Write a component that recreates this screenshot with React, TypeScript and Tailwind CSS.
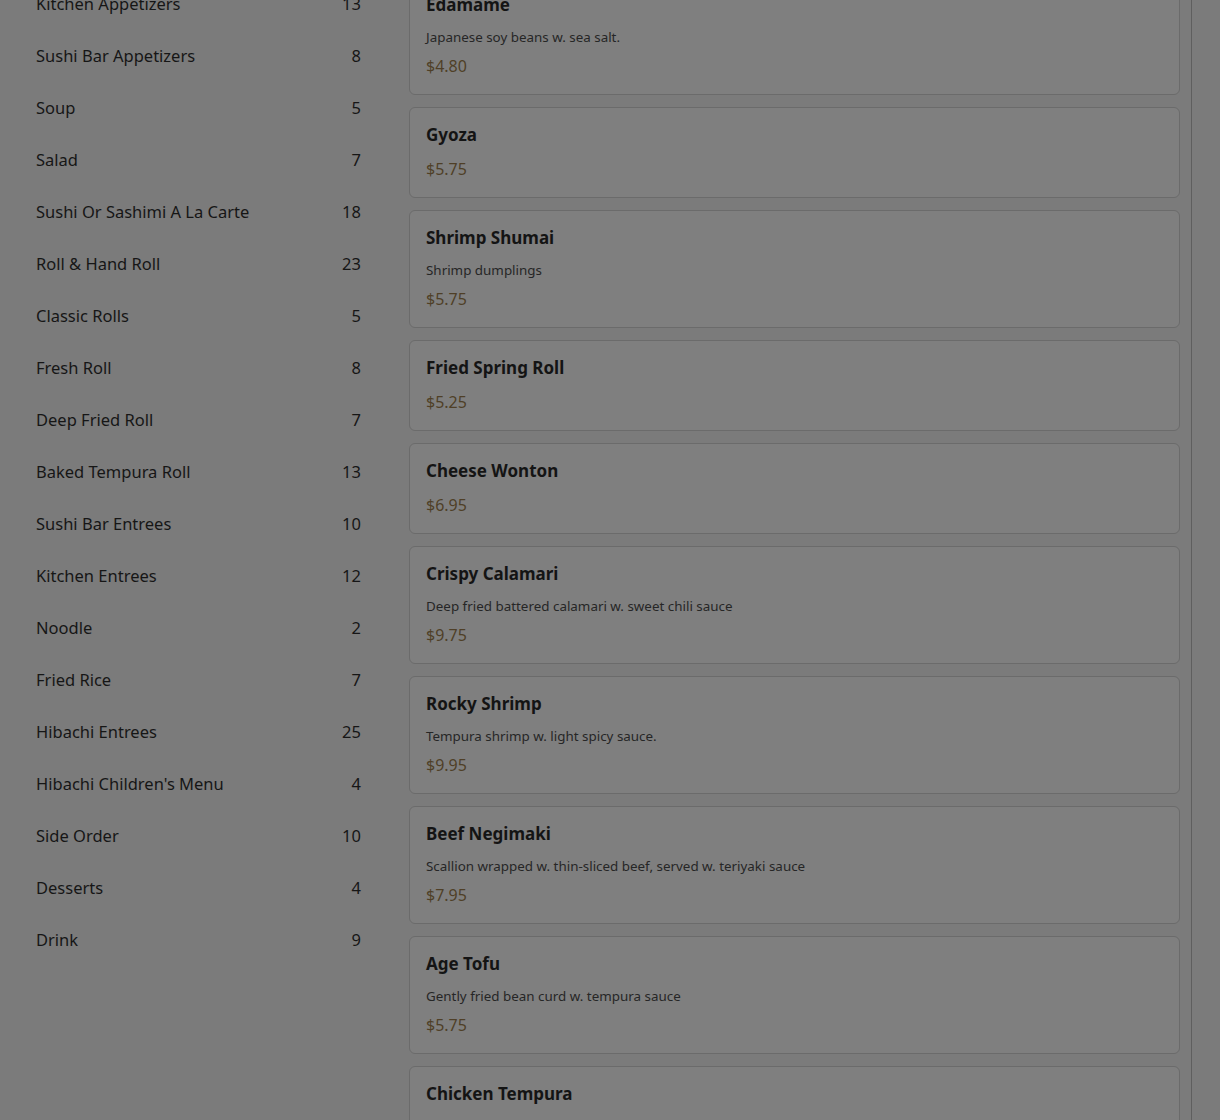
import React from "react";

interface Category {
  name: string;
  count: number;
}

interface MenuItem {
  name: string;
  desc?: string;
  price: string;
}

const categories: Category[] = [
  { name: "Kitchen Appetizers", count: 13 },
  { name: "Sushi Bar Appetizers", count: 8 },
  { name: "Soup", count: 5 },
  { name: "Salad", count: 7 },
  { name: "Sushi Or Sashimi A La Carte", count: 18 },
  { name: "Roll & Hand Roll", count: 23 },
  { name: "Classic Rolls", count: 5 },
  { name: "Fresh Roll", count: 8 },
  { name: "Deep Fried Roll", count: 7 },
  { name: "Baked Tempura Roll", count: 13 },
  { name: "Sushi Bar Entrees", count: 10 },
  { name: "Kitchen Entrees", count: 12 },
  { name: "Noodle", count: 2 },
  { name: "Fried Rice", count: 7 },
  { name: "Hibachi Entrees", count: 25 },
  { name: "Hibachi Children's Menu", count: 4 },
  { name: "Side Order", count: 10 },
  { name: "Desserts", count: 4 },
  { name: "Drink", count: 9 },
];

const items: MenuItem[] = [
  { name: "Edamame", desc: "Japanese soy beans w. sea salt.", price: "$4.80" },
  { name: "Gyoza", price: "$5.75" },
  { name: "Shrimp Shumai", desc: "Shrimp dumplings", price: "$5.75" },
  { name: "Fried Spring Roll", price: "$5.25" },
  { name: "Cheese Wonton", price: "$6.95" },
  {
    name: "Crispy Calamari",
    desc: "Deep fried battered calamari w. sweet chili sauce",
    price: "$9.75",
  },
  { name: "Rocky Shrimp", desc: "Tempura shrimp w. light spicy sauce.", price: "$9.95" },
  {
    name: "Beef Negimaki",
    desc: "Scallion wrapped w. thin-sliced beef, served w. teriyaki sauce",
    price: "$7.95",
  },
  { name: "Age Tofu", desc: "Gently fried bean curd w. tempura sauce", price: "$5.75" },
  { name: "Chicken Tempura", desc: "Chicken and vegetables tempura", price: "$8.95" },
];

const ItemCard: React.FC<{ item: MenuItem }> = ({ item }) => (
  <div className="bg-[#7f7f7f] border border-[#6b6b6b] rounded-md p-4">
    <h3 className="text-[17px] leading-[21px] font-bold text-[#141414]">{item.name}</h3>
    {item.desc && (
      <p className="mt-3 text-[13.4px] leading-5 text-[#262626]">{item.desc}</p>
    )}
    <div className={`${item.desc ? "mt-[7px]" : "mt-3"} text-[16px] leading-6 text-[#4f3f27]`}>
      {item.price}
    </div>
  </div>
);

export default function App() {
  return (
    <div
      className="min-h-screen bg-[#7b7b7b] overflow-hidden"
      style={{ fontFamily: '"Noto Sans", sans-serif' }}
    >
      <div className="flex -mt-[23px]">
        {/* Category sidebar */}
        <aside className="w-[385px] shrink-0 pl-9 pr-6 pt-[1px]">
          {categories.map((c) => (
            <div
              key={c.name}
              className="h-[52px] flex items-center justify-between text-[16.5px] text-[#161616]"
            >
              <span>{c.name}</span>
              <span>{c.count}</span>
            </div>
          ))}
        </aside>

        {/* Item list */}
        <main className="w-[807px] shrink-0 pl-6 pr-[11px] border-r border-[#5f5f5f] flex flex-col gap-3">
          {items.map((item) => (
            <ItemCard key={item.name} item={item} />
          ))}
        </main>
      </div>
    </div>
  );
}
